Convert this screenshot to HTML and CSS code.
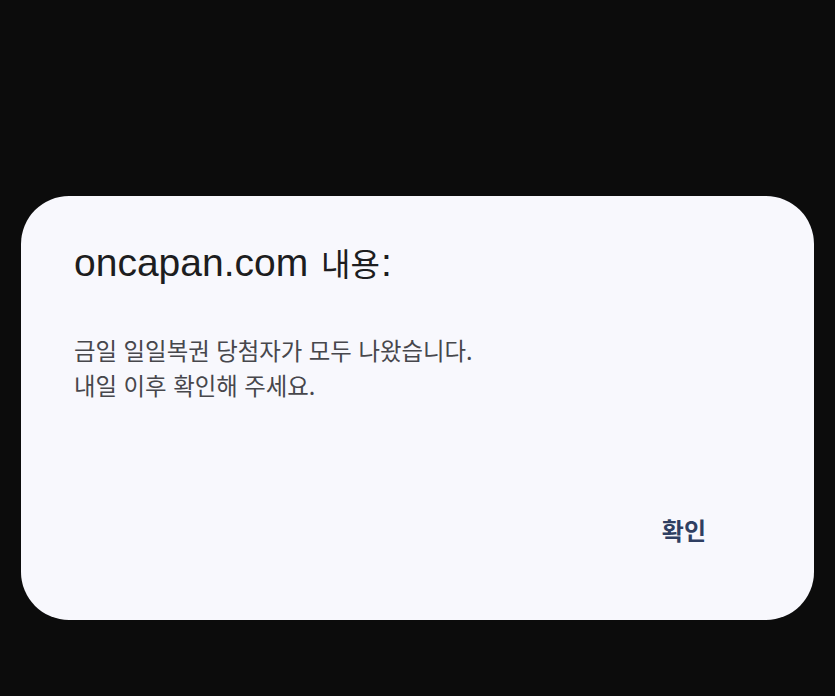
FILE: index.html
```html
<!DOCTYPE html>
<html lang="ko">
<head>
<meta charset="utf-8">
<link rel="stylesheet" href="styles.css">
</head>
<body>
<div class="screen">
  <div class="dialog">
    <h1 class="title">oncapan.com <span class="title-ko">내용</span>:</h1>
    <p class="message">금일 일일복권 당첨자가 모두 나왔습니다.<br>내일 이후 확인해 주세요.</p>
    <div class="actions">
      <button class="btn">확인</button>
    </div>
  </div>
</div>
</body>
</html>
```
FILE: styles.css
```css
html, body {
  margin: 0;
  padding: 0;
  background: #0c0c0c;
}
.screen {
  width: 835px;
  height: 696px;
  padding-top: 196px;
  padding-left: 21px;
  box-sizing: border-box;
}
.dialog {
  width: 793px;
  height: 424px;
  box-sizing: border-box;
  background: #f8f8fd;
  border-radius: 48px;
  padding: 44px 53px 0 53px;
  display: flex;
  flex-direction: column;
}
.title {
  margin: 0;
  font-weight: 400;
  font-size: 39px;
  line-height: 46px;
  color: #1d1d20;
  font-family: "Liberation Sans", "Noto Sans CJK KR", sans-serif;
}
.title-ko {
  font-family: "Noto Sans CJK KR", sans-serif;
  font-size: 32px;
  line-height: 1;
  margin-left: 2px;
  margin-right: 1px;
}
.message {
  margin: 47px 0 0 0;
  font-size: 23.4px;
  line-height: 35px;
  color: #47474c;
  font-family: "Noto Sans CJK KR", sans-serif;
}
.actions {
  margin-top: auto;
  margin-bottom: 75px;
  display: flex;
  justify-content: flex-end;
}
.btn {
  border: none;
  background: none;
  padding: 0 55px 0 0;
  font-family: "Noto Sans CJK KR", sans-serif;
  font-weight: 700;
  font-size: 24px;
  line-height: 30px;
  color: #2f3f62;
}
```
